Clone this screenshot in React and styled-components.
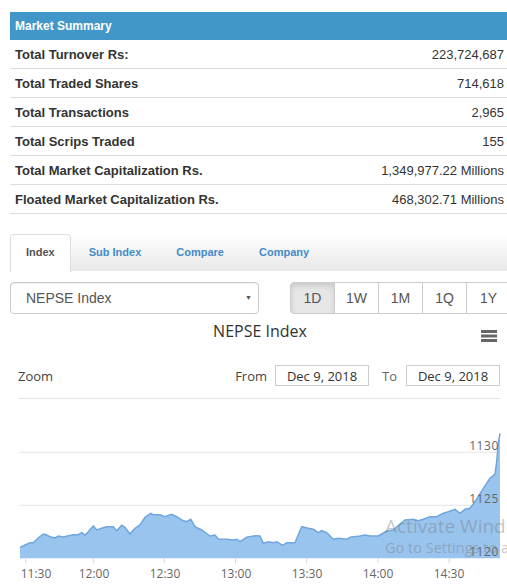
import React from "react";
import styled, { createGlobalStyle } from "styled-components";

const GlobalStyle = createGlobalStyle`
  body {
    margin: 0;
    background: #fff;
    font-family: "Liberation Sans", Arial, sans-serif;
    color: #333;
  }
`;

const summary = [
  ["Total Turnover Rs:", "223,724,687"],
  ["Total Traded Shares", "714,618"],
  ["Total Transactions", "2,965"],
  ["Total Scrips Traded", "155"],
  ["Total Market Capitalization Rs.", "1,349,977.22 Millions"],
  ["Floated Market Capitalization Rs.", "468,302.71 Millions"],
];

const tabs = ["Index", "Sub Index", "Compare", "Company"];
const ranges = ["1D", "1W", "1M", "1Q", "1Y"];

// points in page coordinates (x, y)
const points = [
  [20, 547.7], [25, 545], [30, 542.7], [33.3, 542.7], [38.3, 538], [43.3, 534],
  [46.7, 535], [50, 536.7], [55, 538], [58.3, 536], [63.3, 537], [68.3, 535.7],
  [73.3, 534.7], [78.3, 534.7], [81.7, 532.7], [85, 535], [88.3, 531.7],
  [93.3, 526], [96.7, 530], [101.7, 528.3], [106.7, 526.7], [113.3, 526.7],
  [116.7, 530.7], [121.7, 525.3], [125, 527.3], [130, 534], [135, 528.3],
  [140, 525], [145, 517.3], [150.7, 513.3], [153.3, 514.7], [160, 514.7],
  [165, 516.7], [171.7, 514.3], [176.7, 516.7], [181.7, 520], [186.7, 521.7],
  [190.7, 519.3], [195, 526.7], [201.7, 530], [210, 536], [215, 535],
  [218.3, 539], [226.7, 539.3], [233.3, 540], [236.7, 539.3], [240, 541.7],
  [246.7, 537.3], [255, 535.7], [260, 536], [263.3, 543.3], [268.3, 541.7],
  [273.3, 542.7], [276.7, 541.7], [282.7, 545.3], [286.7, 542.7], [295, 542.7],
  [301.7, 526.7], [308.3, 528.3], [313.3, 529.3], [318.3, 532.7], [321.7, 530.7],
  [326.7, 532.7], [333.3, 539.3], [338.3, 538.3], [346.7, 539.3], [350, 537.3],
  [360, 536], [365, 535], [370, 536], [378.3, 536], [386.7, 531], [393.3, 530],
  [400, 524], [405, 520], [413.3, 519.3], [418.3, 520.7], [423.3, 519.3],
  [430, 516.7], [436.7, 516.7], [443.3, 513.3], [448.3, 511.7], [455, 509.3],
  [460, 513.3], [465, 509.3], [470, 508.3], [473.3, 504], [478.3, 496.7],
  [483.3, 488.3], [490, 478.3], [495, 474], [496.7, 461.7], [498.3, 443.3],
  [500, 433.3],
];

const base = 558.3;
const linePath = points.map(([x, y], i) => `${i ? "L" : "M"}${x},${y}`).join(" ");
const areaPath = `M20,${base} ${points.map(([x, y]) => `L${x},${y}`).join(" ")} L500,${base} Z`;

const xTicks = [25.7, 93.3, 164.3, 235.6, 306.7, 378, 449.2];
const xLabels = [
  [36, "11:30"], [94, "12:00"], [165, "12:30"], [236, "13:00"],
  [307, "13:30"], [378, "14:00"], [449, "14:30"],
];
const yLabels = [
  [452.3, "1130"], [505.3, "1125"], [558.3, "1120"],
];

const App = () => {
  return (
    <Page>
      <GlobalStyle />
      <SummaryHeader>Market Summary</SummaryHeader>
      {summary.map(([label, value]) => (
        <Row key={label}>
          <Label>{label}</Label>
          <Value>{value}</Value>
        </Row>
      ))}

      <TabBar>
        {tabs.map((t, i) => (
          <Tab key={t} active={i === 0}>
            {t}
          </Tab>
        ))}
      </TabBar>

      <Controls>
        <Select>
          NEPSE Index
          <Caret>▼</Caret>
        </Select>
        <BtnGroup>
          {ranges.map((r, i) => (
            <RangeBtn key={r} active={i === 0} first={i === 0}>
              {r}
            </RangeBtn>
          ))}
        </BtnGroup>
      </Controls>

      <TitleRow>
        <span />
        <ChartTitle>NEPSE Index</ChartTitle>
        <Menu>
          <svg width="18" height="14" viewBox="0 0 18 14">
            <rect x="1" y="1" width="16" height="3" fill="#666" />
            <rect x="1" y="5.5" width="16" height="3" fill="#666" />
            <rect x="1" y="10" width="16" height="3" fill="#666" />
          </svg>
        </Menu>
      </TitleRow>

      <RangeRow>
        <ZoomLabel>Zoom</ZoomLabel>
        <Dates>
          <ZoomLabel>From</ZoomLabel>
          <DateBox>Dec 9, 2018</DateBox>
          <ZoomLabel gap>To</ZoomLabel>
          <DateBox>Dec 9, 2018</DateBox>
        </Dates>
      </RangeRow>

      <Chart width="497" height="189" viewBox="10 399 497 189">
        <line x1="20" x2="500" y1="452.3" y2="452.3" stroke="#e6e6e6" strokeWidth="1" />
        <line x1="20" x2="500" y1="505.3" y2="505.3" stroke="#e6e6e6" strokeWidth="1" />
        <path d={areaPath} fill="#98c4ee" />
        <path d={linePath} fill="none" stroke="#6fa6de" strokeWidth="1.5" />
        {xTicks.map((x) => (
          <line key={x} x1={x} x2={x} y1={base} y2={base + 5} stroke="#ccd6eb" strokeWidth="1" />
        ))}
        {xLabels.map(([x, t]) => (
          <AxisText key={t} x={x} y="578" textAnchor="middle">
            {t}
          </AxisText>
        ))}
        {yLabels.map(([y, t]) => (
          <AxisText key={t} x="499" y={y - 2.5} textAnchor="end" letterSpacing="0.6">
            {t}
          </AxisText>
        ))}
      </Chart>

      <Watermark>
        <Big>Activate Windows</Big>
        <Small>Go to Settings to activate Windows.</Small>
      </Watermark>
    </Page>
  );
};

export default App;

const Page = styled.div`
  position: relative;
  width: 507px;
  height: 588px;
  overflow: hidden;
  box-sizing: border-box;
  padding: 12px 0 0 10px;
`;

const SummaryHeader = styled.div`
  height: 28px;
  background: #4197c7;
  color: #fff;
  font-weight: bold;
  font-size: 12px;
  display: flex;
  align-items: center;
  padding: 0 5px;
`;

const Row = styled.div`
  height: 28px;
  border-bottom: 1px solid #ddd;
  display: flex;
  align-items: center;
  justify-content: space-between;
  padding: 0 3px 0 5px;
  font-size: 13px;
  &:last-of-type {
    border-bottom: none;
  }
`;

const Label = styled.span`
  font-weight: bold;
  color: #333;
`;

const Value = styled.span`
  color: #333;
`;

const TabBar = styled.div`
  margin-top: 20px;
  height: 37px;
  display: flex;
  align-items: stretch;
  background: linear-gradient(#ffffff, #e8e8e8);
`;

const Tab = styled.div`
  padding: 0 ${(p) => (p.active ? "15px" : "16px")};
  margin-right: 1px;
  display: flex;
  align-items: center;
  font-size: 11px;
  font-weight: bold;
  color: ${(p) => (p.active ? "#555" : "#428bca")};
  background: ${(p) => (p.active ? "#fff" : "transparent")};
  border: 1px solid ${(p) => (p.active ? "#ddd" : "transparent")};
  border-bottom: none;
  border-radius: 4px 4px 0 0;
  margin-bottom: -1px;
  padding-bottom: 3px;
`;

const Controls = styled.div`
  margin-top: 11px;
  display: flex;
  align-items: center;
  height: 32px;
`;

const Select = styled.div`
  position: relative;
  flex-shrink: 0;
  width: 249px;
  height: 32px;
  box-sizing: border-box;
  border: 1px solid #ccc;
  border-radius: 4px;
  padding-left: 15px;
  display: flex;
  align-items: center;
  font-size: 14px;
  color: #555;
  box-shadow: inset 0 1px 1px rgba(0, 0, 0, 0.075);
`;

const Caret = styled.span`
  position: absolute;
  right: 6px;
  top: 11px;
  font-size: 7px;
  color: #555;
`;

const BtnGroup = styled.div`
  margin-left: 31px;
  display: flex;
  flex-shrink: 0;
`;

const RangeBtn = styled.div`
  width: 45px;
  height: 32px;
  box-sizing: border-box;
  flex-shrink: 0;
  margin-left: ${(p) => (p.first ? "0" : "-1px")};
  border: 1px solid #ccc;
  border-radius: ${(p) => (p.first ? "4px 0 0 4px" : "0")};
  background: ${(p) => (p.active ? "#e6e6e6" : "#fff")};
  box-shadow: ${(p) => (p.active ? "inset 0 3px 5px rgba(0,0,0,0.125)" : "none")};
  display: flex;
  align-items: center;
  justify-content: center;
  font-size: 14px;
  color: #555;
`;

const TitleRow = styled.div`
  height: 34px;
  display: grid;
  grid-template-columns: 1fr auto 1fr;
  align-items: start;
`;

const ChartTitle = styled.div`
  padding-top: 6px;
  line-height: 22px;
  font-family: "Open Sans", sans-serif;
  font-size: 16px;
  color: #333;
  margin-left: 3px;
`;

const Menu = styled.div`
  justify-self: end;
  margin-top: 15px;
  margin-right: 9px;
  line-height: 0;
`;

const RangeRow = styled.div`
  height: 51px;
  box-sizing: border-box;
  padding-top: 5px;
  margin: 0 7px 0 8px;
  border-bottom: 1px solid #e6e6e6;
  display: flex;
  align-items: center;
  justify-content: space-between;
`;

const ZoomLabel = styled.span`
  font-family: "Open Sans", sans-serif;
  font-size: 13px;
  color: ${(p) => (p.gap ? "#666" : "#444")};
  margin-left: ${(p) => (p.gap ? "13px" : "0")};
  margin-right: ${(p) => (p.gap ? "9px" : "0")};
`;

const Dates = styled.div`
  display: flex;
  align-items: center;
  color: #666;
`;

const DateBox = styled.div`
  width: 94px;
  height: 21px;
  box-sizing: border-box;
  margin-left: 8px;
  border: 1px solid #ccc;
  display: flex;
  align-items: center;
  justify-content: center;
  font-family: "Open Sans", sans-serif;
  font-size: 13px;
  color: #333;
  &:last-child {
    margin-left: 0;
  }
`;

const Chart = styled.svg`
  display: block;
`;

const AxisText = styled.text`
  font-family: "Open Sans", sans-serif;
  font-size: 12px;
  fill: #666;
`;

const Watermark = styled.div`
  position: absolute;
  left: 385px;
  top: 513px;
  white-space: nowrap;
  font-family: "Open Sans", sans-serif;
  color: rgba(120, 120, 120, 0.42);
  pointer-events: none;
`;

const Big = styled.div`
  font-size: 19px;
  line-height: 26px;
`;

const Small = styled.div`
  font-size: 14.5px;
  line-height: 18px;
`;
